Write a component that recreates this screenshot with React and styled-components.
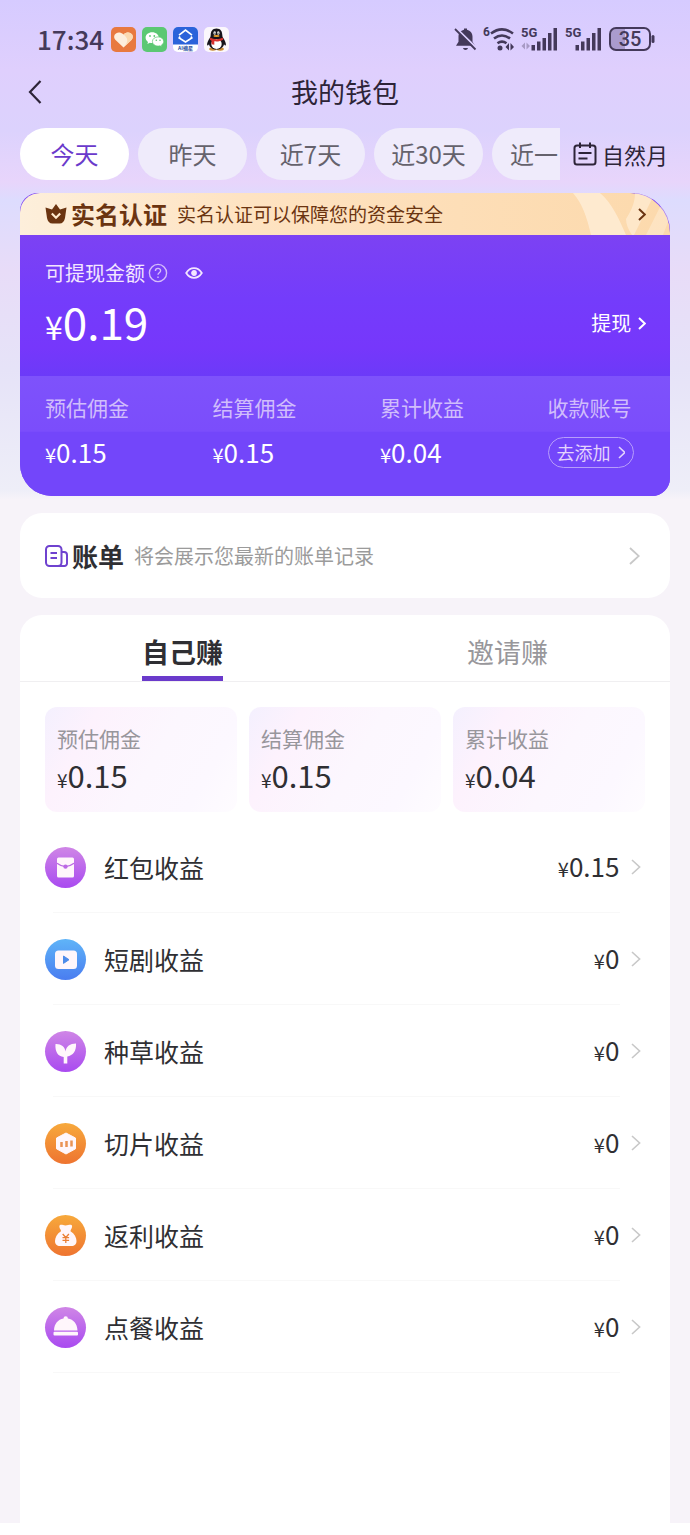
import { useState } from "react";
import styled, { createGlobalStyle, css } from "styled-components";

const RANGES = ["今天", "昨天", "近7天", "近30天", "近一"];

const BALANCES = [
    { label: "预估佣金", value: "0.15" },
    { label: "结算佣金", value: "0.15" },
    { label: "累计收益", value: "0.04" },
];

const PURPLE = ["#cf86e6", "#a94af0"];
const BLUE = ["#5fb4f8", "#4a7df0"];
const ORANGE = ["#f7a93c", "#ee7430"];

const INCOMES = [
    { label: "红包收益", value: "0.15", colors: PURPLE, icon: <EnvelopeShape /> },
    { label: "短剧收益", value: "0", colors: BLUE, icon: <PlayShape /> },
    { label: "种草收益", value: "0", colors: PURPLE, icon: <SproutShape /> },
    { label: "切片收益", value: "0", colors: ORANGE, icon: <SliceShape /> },
    { label: "返利收益", value: "0", colors: ORANGE, icon: <BagShape /> },
    { label: "点餐收益", value: "0", colors: PURPLE, icon: <DishShape /> },
];

export default function App() {
    const [range, setRange] = useState("今天");
    const [tab, setTab] = useState("自己赚");
    return (<>
    <GlobalStyle />
    <Page>
        <StatusBar>
            <Time>17:34</Time>
            <AppIcons />
            <StatusIcons />
        </StatusBar>
        <Header>
            <BackButton aria-label="返回">
                <svg width="16" height="26" viewBox="0 0 16 26">
                    <path d="M13.500 2 3 13l10.500 11" fill="none" stroke="currentColor" strokeWidth="2.200" />
                </svg>
            </BackButton>
            <h1>我的钱包</h1>
        </Header>
        <Filters>
            <Ranges>
                {RANGES.map((item) => (
                    <Chip key={item} $active={item === range} onClick={() => setRange(item)}>{item}</Chip>
                ))}
            </Ranges>
            <MonthButton>
                <svg width="24" height="24" viewBox="0 0 24 24" fill="none" stroke="currentColor" strokeWidth="2">
                    <rect x="1.500" y="3.500" width="21" height="19" rx="2.500" />
                    <path d="M7 .5v5.500M17 .5v5.500M5.500 11h13M5.500 16.500h9" />
                </svg>
                自然月
            </MonthButton>
        </Filters>

        <Wallet>
            <VerifyBanner href="#verify">
                <Ribbon viewBox="0 0 110 42" preserveAspectRatio="none">
                    <path d="M13 0h27c12 10 19 26 26 42H31C27 24 22 10 13 0z" fill="#fff3e0" opacity=".65" />
                    <path d="M75 0h20L74 42h-2c-4-6-6-11-6-16 5-8 9-16 9-26z" fill="#fff3e0" opacity=".55" />
                    <path d="M100 14 86 42h17l7-18V10z" fill="#fff3e0" opacity=".4" />
                </Ribbon>
                <svg width="22" height="20" viewBox="0 0 22 20">
                    <path d="M11 0 15 5.500 21.500 3.500 20 14c-.6 3.500-2.500 5.500-5.500 5.500h-7C4.500 19.500 2.600 17.500 2 14L.5 3.500 7 5.500z" fill="#6b3410" />
                    <path d="m6.800 9.500 4.200 4.200 4.200-4.200" fill="none" stroke="#ffe9cc" strokeWidth="2.200" />
                </svg>
                <strong>实名认证</strong>
                <span>实名认证可以保障您的资金安全</span>
                <Chevron size={13} weight={2} />
            </VerifyBanner>
            <Available>
                <div>
                    <AvailableLabel>
                        可提现金额
                        <IconButton aria-label="说明">
                            <svg width="20" height="20" viewBox="0 0 20 20" fill="none" stroke="currentColor" strokeWidth="1.400">
                                <circle cx="10" cy="10" r="8.600" />
                                <path d="M7.400 8c0-3.500 5.200-3.400 5.200-.3 0 2-2.600 2.100-2.600 4.100M10 13.400v1.600" />
                            </svg>
                        </IconButton>
                        <EyeButton aria-label="显示金额">
                            <svg width="18" height="14" viewBox="0 0 18 14" fill="none" stroke="currentColor" strokeWidth="1.800">
                                <path d="M1.200 7c4-6.400 11.600-6.400 15.600 0-4 6.400-11.600 6.400-15.600 0z" />
                                <circle cx="9" cy="7" r="2" fill="currentColor" />
                            </svg>
                        </EyeButton>
                    </AvailableLabel>
                    <Amount $size={44} $sign={32}><small>¥</small>0.19</Amount>
                </div>
                <Withdraw>提现<Chevron size={13} weight={2} /></Withdraw>
            </Available>
            <Balances>
                {BALANCES.map((item) => (
                    <Balance key={item.label}>
                        <p>{item.label}</p>
                        <Amount $size={26} $sign={20}><small>¥</small>{item.value}</Amount>
                    </Balance>
                ))}
                <Balance>
                    <p>收款账号</p>
                    <AddButton>去添加<Chevron size={13} weight={1.6} /></AddButton>
                </Balance>
            </Balances>
        </Wallet>

        <Bill href="#bill">
            <svg width="23" height="22" viewBox="0 0 23 22" fill="none" stroke="#6f42cf" strokeWidth="2">
                <rect x="1" y="1" width="15.500" height="20" rx="3.500" />
                <path d="M16.500 7h2.500a3 3 0 0 1 3 3v8.500a2.500 2.500 0 0 1-2.500 2.500H13M5.500 8h6.500M5.500 13h6.500" />
            </svg>
            <strong>账单</strong>
            <span>将会展示您最新的账单记录</span>
            <Chevron size={18} weight={1.8} />
        </Bill>

        <Earnings>
            <Tabs role="tablist">
                {["自己赚", "邀请赚"].map((item) => (
                    <Tab key={item} role="tab" aria-selected={item === tab} $active={item === tab} onClick={() => setTab(item)}>
                        <span>{item}</span>
                    </Tab>
                ))}
            </Tabs>
            <Summary>
                {BALANCES.map((item) => (
                    <SummaryCard key={item.label}>
                        <p>{item.label}</p>
                        <Amount $size={31} $sign={19}><small>¥</small>{item.value}</Amount>
                    </SummaryCard>
                ))}
            </Summary>
            <List>
                {INCOMES.map((item) => (
                    <li key={item.label}>
                        <Row href="#income">
                            <Badge $from={item.colors[0]} $to={item.colors[1]}>
                                <svg width="41" height="41" viewBox="0 0 41 41" fill="#fff6fb">{item.icon}</svg>
                            </Badge>
                            <span>{item.label}</span>
                            <Amount $size={26} $sign={20}><small>¥</small>{item.value}</Amount>
                            <Chevron size={16} weight={1.6} />
                        </Row>
                    </li>
                ))}
            </List>
        </Earnings>
    </Page>
    </>)
}

function Chevron({ size, weight }) {
    return (
        <svg className="chevron" width={size * 0.6} height={size} viewBox={`0 0 ${size * 0.6} ${size}`}>
            <path d={`M1 1L${size * 0.6 - 1} ${size / 2}L1 ${size - 1}`} fill="none" stroke="currentColor" strokeWidth={weight} />
        </svg>
    )
}

function AppIcons() {
    return (
        <AppRow>
            <svg width="25" height="25" viewBox="0 0 25 25">
                <rect width="25" height="25" rx="5" fill="#e8793f" />
                <path d="M12.500 20.500 4.300 12.700C.6 8 6.800 2.500 12.500 7.400c5.700-4.900 11.900.6 8.200 5.300z" fill="#fdeedc" />
                <path d="M12.500 7.400c5.700-4.900 11.900.6 8.200 5.300l-8.200 7.800c5-6 5-9 0-13.100z" fill="#fbd9b0" />
            </svg>
            <svg width="25" height="25" viewBox="0 0 25 25">
                <rect width="25" height="25" rx="5" fill="#5bc873" />
                <path d="M10.200 5.300c-3.700 0-6.600 2.400-6.600 5.400 0 1.700.9 3.200 2.400 4.200l-.6 2 2.400-1.200c.8.200 1.600.3 2.400.3 3.700 0 6.600-2.400 6.600-5.300s-2.900-5.400-6.600-5.400z" fill="#fff" />
                <circle cx="8" cy="9" r=".9" fill="#5bc873" />
                <circle cx="12.300" cy="9" r=".9" fill="#5bc873" />
                <path d="M16.100 9.900c-3.200 0-5.700 2-5.700 4.600s2.500 4.600 5.700 4.600c.7 0 1.300-.1 1.900-.3l2 1-.5-1.800c1.400-.9 2.200-2.100 2.200-3.500 0-2.600-2.500-4.600-5.600-4.600z" fill="#fff" stroke="#5bc873" strokeWidth=".7" />
                <circle cx="14.300" cy="13.300" r=".8" fill="#5bc873" />
                <circle cx="18" cy="13.300" r=".8" fill="#5bc873" />
            </svg>
            <svg width="25" height="25" viewBox="0 0 25 25">
                <rect width="25" height="25" rx="5" fill="#fff" />
                <path d="M5 0h15a5 5 0 0 1 5 5v12.500H0V5a5 5 0 0 1 5-5z" fill="#2b63da" />
                <path d="m6 8.200 6.500-5.200L19 8.200M7 9.500l-.8 1.500 6.300 4 6.300-4L18 9.500" fill="none" stroke="#fff" strokeWidth="1.700" />
                <text x="12.500" y="23" textAnchor="middle" fontSize="5" fontWeight="700" fill="#2b4f9e">AI摘星</text>
            </svg>
            <svg width="25" height="25" viewBox="0 0 25 25">
                <rect width="25" height="25" rx="5" fill="#fbf7fc" />
                <ellipse cx="8.800" cy="22" rx="3.600" ry="1.700" fill="#c98b32" />
                <ellipse cx="16.200" cy="22" rx="3.600" ry="1.700" fill="#c98b32" />
                <path d="M12.500 1.500c-4 0-5.800 2.900-5.800 6.500 0 1-.2 1.800-.8 2.800-1.500 2.500-3 5-2.800 7 .1 1 .9.900 1.900-.6.700 3.200 3.600 5.300 7.500 5.300s6.800-2.100 7.500-5.300c1 1.500 1.800 1.600 1.900.6.200-2-1.300-4.500-2.800-7-.6-1-.8-1.800-.8-2.800 0-3.600-1.800-6.500-5.800-6.500z" fill="#17141c" />
                <ellipse cx="12.500" cy="17" rx="5.200" ry="5" fill="#fff" />
                <ellipse cx="10.700" cy="6" rx="1.300" ry="1.700" fill="#fff" />
                <ellipse cx="14.300" cy="6" rx="1.300" ry="1.700" fill="#fff" />
                <circle cx="11" cy="6.200" r=".6" />
                <circle cx="14" cy="6.200" r=".6" />
                <ellipse cx="12.500" cy="9" rx="3.200" ry="1" fill="#eaa02c" />
                <path d="M6.300 10.500c4 2.200 8.400 2.200 12.400 0l.6 2.200c-3 1.600-6 2-9 1.600v3.400l-2.800-.4v-3.600l-1.700-.9z" fill="#d8322f" />
            </svg>
        </AppRow>
    )
}

function StatusIcons() {
    return (
        <StatusRow>
            <svg width="23" height="24" viewBox="0 0 23 24" fill="currentColor">
                <path d="M10 1.500h3v1.200c3.500.8 5.500 3.500 5.500 7v5l2.500 4H2l2.500-4v-5c0-3.500 2-6.200 5.500-7zM9 21h5c-.5 2.500-4.500 2.500-5 0z" />
                <path d="M2.500 1.500 23.500 22" stroke="#dccefd" strokeWidth="2" />
                <path d="M1 2 21.500 22.500" stroke="currentColor" strokeWidth="1.800" />
            </svg>
            <svg width="32" height="26" viewBox="0 0 32 26" fill="none" stroke="currentColor" strokeWidth="2.600">
                <text x="0" y="10" fontSize="12" fontWeight="700" fill="currentColor" stroke="none">6</text>
                <path d="M8 7.500c7-5.300 15-5.300 22 0M11 12.500c5-3.800 11-3.800 16 0M14.500 17.300c2.800-2 6.200-2 9 0" />
                <circle cx="17" cy="22" r="2.500" fill="currentColor" stroke="none" />
                <path d="M26 17v7.500L22.500 21zM27.500 17v7.500L31 21z" fill="currentColor" stroke="none" />
            </svg>
            <SignalIcon transfer />
            <SignalIcon />
            <svg width="46" height="24" viewBox="0 0 46 24">
                <path d="M7 1.500h9v21H7a5 5 0 0 1-5-5v-11a5 5 0 0 1 5-5z" fill="#aa9bce" />
                <rect x="1" y="1" width="40" height="22" rx="6" fill="none" stroke="currentColor" strokeWidth="2" />
                <rect x="42.500" y="8" width="3" height="8" rx="1.500" fill="currentColor" />
                <text x="21" y="19" textAnchor="middle" fontSize="20" fontWeight="500" fill="currentColor">35</text>
            </svg>
        </StatusRow>
    )
}

function SignalIcon({ transfer }) {
    return (
        <svg width="38" height="26" viewBox="0 0 38 26" fill="currentColor">
            <text x="0" y="11" fontSize="13" fontWeight="700">5G</text>
            {transfer && <path d="M4 16.500v7L.5 20zM5.500 16.500v7L9 20z" opacity=".35" />}
            <path d="M10.500 19h3.500v5.500h-3.500zM16 15.500h3.500v9H16zM21.500 12h3.500v12.500h-3.500zM27 7h3.500v17.500H27zM32.500 2H36v22.500h-3.500z" />
        </svg>
    )
}

function EnvelopeShape() {
    return (<>
        <rect x="12" y="10.500" width="17" height="20" rx="1.500" />
        <path d="M12 16.300c5.500 4.200 11.500 4.200 17 0" fill="none" stroke="#bb68e4" strokeWidth="1.300" />
        <circle cx="20.500" cy="19.600" r="2.200" fill="#bb68e4" />
    </>)
}

function PlayShape() {
    return (<>
        <rect x="10" y="11.500" width="22" height="18.500" rx="3.500" />
        <path d="m18.500 17 5.500 3.700-5.500 3.700z" fill="#4d8bea" stroke="#4d8bea" strokeLinejoin="round" />
    </>)
}

function SproutShape() {
    return <path d="M10.500 13c5.500-.3 9.300 2.500 10 7.500.8-5.300 4.500-8 10.500-8 .5 7.500-3 12-8.700 13v7h-3.600v-6.500C13 25.500 9.800 20.500 10.500 13z" />
}

function SliceShape() {
    return (<>
        <path d="m21 10 9.500 5v10.800L21 31l-9.500-5.200V15z" stroke="#fff6fb" strokeLinejoin="round" />
        <path d="M16.500 19v5M21.500 18v6M26.500 17.500v6" stroke="#ea9355" strokeWidth="2.500" />
    </>)
}

function BagShape() {
    return (<>
        <path d="M15 10c2-.6 3 .5 5.500.5s4-1 6-.5c1.200.5.500 3-.8 5l-.2 1.200c4 2.500 6 6.300 6 9.800 0 3.500-2 5-5 5H15c-3 0-5-1.500-5-5 0-3.500 2-7.300 6-9.800L15.800 15c-1.500-2-2-4.500-.8-5z" />
        <path d="m17.700 19 3.100 3.500 3.100-3.500M20.800 22.500v5.500M17.500 22.700h6.600M17.500 25.300h6.600" fill="none" stroke="#ea7f35" strokeWidth="1.300" />
    </>)
}

function DishShape() {
    return (<>
        <path d="M18.500 11.500a2.200 2.200 0 0 1 4.400 0c5.600 1 9.300 5 9.600 12H9c.3-7 4-11 9.500-12z" />
        <rect x="8.500" y="24.800" width="24.500" height="3.600" rx="1" />
    </>)
}

const GlobalStyle = createGlobalStyle`
    * {
        box-sizing: border-box;
        margin: 0;
        padding: 0;
    }
    body {
        background: #fff;
        color: #2f2f33;
        font-family: "Noto Sans CJK SC", sans-serif;
    }
    button {
        border: none;
        background: none;
        font-family: inherit;
        color: inherit;
        cursor: pointer;
    }
    a {
        color: inherit;
        text-decoration: none;
    }
    svg {
        flex-shrink: 0;
    }
`
const Page = styled.div`
    display: flex;
    flex-direction: column;
    min-height: calc(100vh - 12px);
    padding: 0 20px;
    background: linear-gradient(#d6cbff 0, #dfcffd 70px, #dcd2fd 130px, #e8d5fb 182px, #dddcfe 200px, #e8dcf8 270px, #e6e3f8 370px, #eeeef8 490px, #f7f3f9 500px);
`
const StatusBar = styled.div`
    display: flex;
    align-items: center;
    height: 64px;
    padding: 14px 15px 0 17px;
    color: #44395a;
`
const Time = styled.span`
    font-size: 26px;
    font-weight: 500;
    line-height: 32px;
`
const AppRow = styled.div`
    display: flex;
    gap: 6px;
    margin-left: 7px;
`
const StatusRow = styled.div`
    display: flex;
    align-items: center;
    gap: 6px;
    margin-left: auto;
    text {
        font-family: Roboto, sans-serif;
    }
`
const Header = styled.header`
    display: grid;
    grid-template-columns: 32px 1fr 32px;
    align-items: center;
    height: 56px;
    color: #2d2438;
    h1 {
        font-size: 27px;
        font-weight: 400;
        line-height: 40px;
        text-align: center;
    }
`
const BackButton = styled.button`
    display: flex;
    padding-left: 7px;
`
const Filters = styled.div`
    display: flex;
    align-items: center;
    gap: 13px;
    margin-top: 8px;
`
const Ranges = styled.div`
    display: flex;
    flex: 1;
    gap: 9px;
    min-width: 0;
    overflow: hidden;
`
const Chip = styled.button`
    flex: 0 0 109px;
    height: 52px;
    border-radius: 26px;
    background: ${({ $active }) => ($active ? "#fff" : "#efebfb")};
    color: ${({ $active }) => ($active ? "#6a3acb" : "#65626c")};
    font-size: 24px;
    line-height: 36px;
    &:last-child {
        padding-left: 18px;
        text-align: left;
    }
`
const MonthButton = styled.button`
    display: flex;
    align-items: center;
    gap: 5px;
    padding-right: 2px;
    color: #2d2438;
    font-size: 22px;
    line-height: 32px;
`
const Wallet = styled.section`
    margin-top: 13px;
    border-radius: 18px 38px 18px 32px;
    overflow: hidden;
    background: #7a3ff5;
    color: #fff;
`
const VerifyBanner = styled.a`
    position: relative;
    display: flex;
    align-items: center;
    height: 42px;
    padding: 0 24px 0 25px;
    border-radius: 20px 40px 0 0;
    background: linear-gradient(90deg, #fdefdb, #fee3c2 35%, #fcd9ac);
    color: #6b3410;
    strong {
        margin-left: 4px;
        font-size: 24px;
        line-height: 36px;
    }
    span {
        margin-left: 10px;
        font-size: 19px;
        line-height: 28px;
    }
    .chevron {
        position: relative;
        margin-left: auto;
    }
`
const Ribbon = styled.svg`
    position: absolute;
    top: 0;
    right: 0;
    width: 110px;
    height: 100%;
`
const Available = styled.div`
    display: flex;
    justify-content: space-between;
    height: 141px;
    padding: 24px 24px 0 25px;
    background: linear-gradient(#7c42f3, #743cfb 45%, #7637fb 80%, #6c3af8);
`
const AvailableLabel = styled.div`
    display: flex;
    align-items: center;
    margin-bottom: 8px;
    color: #f3e6ff;
    font-size: 20px;
    line-height: 28px;
`
const IconButton = styled.button`
    display: flex;
    margin-left: 3px;
    color: #d5bcfa;
`
const EyeButton = styled(IconButton)`
    margin-left: 17px;
    color: #f3e6ff;
`
const Amount = styled.p`
    font-size: ${({ $size }) => $size}px;
    line-height: ${({ $size }) => ($size > 40 ? 52 : 36)}px;
    white-space: nowrap;
    small {
        font-size: ${({ $sign }) => $sign}px;
    }
`
const Withdraw = styled.button`
    display: flex;
    align-items: center;
    align-self: flex-start;
    gap: 7px;
    margin-top: 50px;
    font-size: 20px;
    line-height: 28px;
`
const Balances = styled.div`
    display: grid;
    grid-template-columns: repeat(3, 5fr) 3fr;
    height: 120px;
    padding: 16px 22px 0 25px;
    background: linear-gradient(#7e52fb, #7b4dfb 46%, #7346fa 47%, #7346fa);
`
const Balance = styled.div`
    display: flex;
    flex-direction: column;
    align-items: flex-start;
    gap: 12px;
    p:first-child {
        color: #d0bdfb;
        font-size: 21px;
        line-height: 30px;
        white-space: nowrap;
    }
`
const AddButton = styled.button`
    display: flex;
    align-items: center;
    gap: 7px;
    margin-top: 3px;
    padding: 0 8px;
    border: 1px solid #b79dfb;
    border-radius: 16px;
    color: #e3d3fd;
    font-size: 18px;
    line-height: 29px;
    white-space: nowrap;
`
const panel = css`
    margin-top: 17px;
    background: #fff;
`
const Bill = styled.a`
    ${panel}
    display: flex;
    align-items: center;
    height: 85px;
    padding: 0 30px 0 25px;
    border-radius: 22px;
    strong {
        margin-left: 4px;
        font-size: 26px;
        line-height: 38px;
    }
    span {
        margin-left: 10px;
        color: #9b9b9b;
        font-size: 20px;
        line-height: 30px;
    }
    .chevron {
        margin-left: auto;
        color: #c8c8c8;
    }
`
const Earnings = styled.section`
    ${panel}
    flex: 1;
    padding-bottom: 24px;
    border-radius: 22px 22px 0 0;
`
const Tabs = styled.div`
    display: flex;
    border-bottom: 1px solid #f0eff1;
`
const Tab = styled.button`
    display: flex;
    flex: 1;
    justify-content: center;
    padding-top: 17px;
    color: ${({ $active }) => ($active ? "#2f2f33" : "#98979b")};
    font-size: 27px;
    font-weight: ${({ $active }) => ($active ? 700 : 400)};
    line-height: 40px;
    span {
        padding-bottom: 4px;
        border-bottom: 5px solid ${({ $active }) => ($active ? "#6a3acb" : "transparent")};
    }
`
const Summary = styled.div`
    display: grid;
    grid-template-columns: repeat(3, 1fr);
    gap: 12px;
    padding: 25px 25px 0;
`
const SummaryCard = styled.div`
    height: 105px;
    padding: 16px 12px 0;
    border-radius: 12px;
    background: linear-gradient(120deg, #f4f0fe, #fdf2fd 22%, #fcf7fe 55%, #fcf8ff 80%, #fefcff);
    p:first-child {
        margin-bottom: 4px;
        color: #98969c;
        font-size: 21px;
        line-height: 30px;
    }
`
const List = styled.ul`
    margin-top: 9px;
    padding: 0 25px;
    list-style: none;
`
const Row = styled.a`
    display: flex;
    align-items: center;
    height: 92px;
    padding-right: 4px;
    background: linear-gradient(#f8f8f8, #f8f8f8) 8px 100% / calc(100% - 33px) 1px no-repeat;
    span {
        flex: 1;
        margin-left: 18px;
        font-size: 25px;
        line-height: 36px;
    }
    .chevron {
        margin-left: 12px;
        color: #c8c8c8;
    }
`
const Badge = styled.div`
    display: flex;
    border-radius: 50%;
    background: linear-gradient(${({ $from }) => $from}, ${({ $to }) => $to});
`
